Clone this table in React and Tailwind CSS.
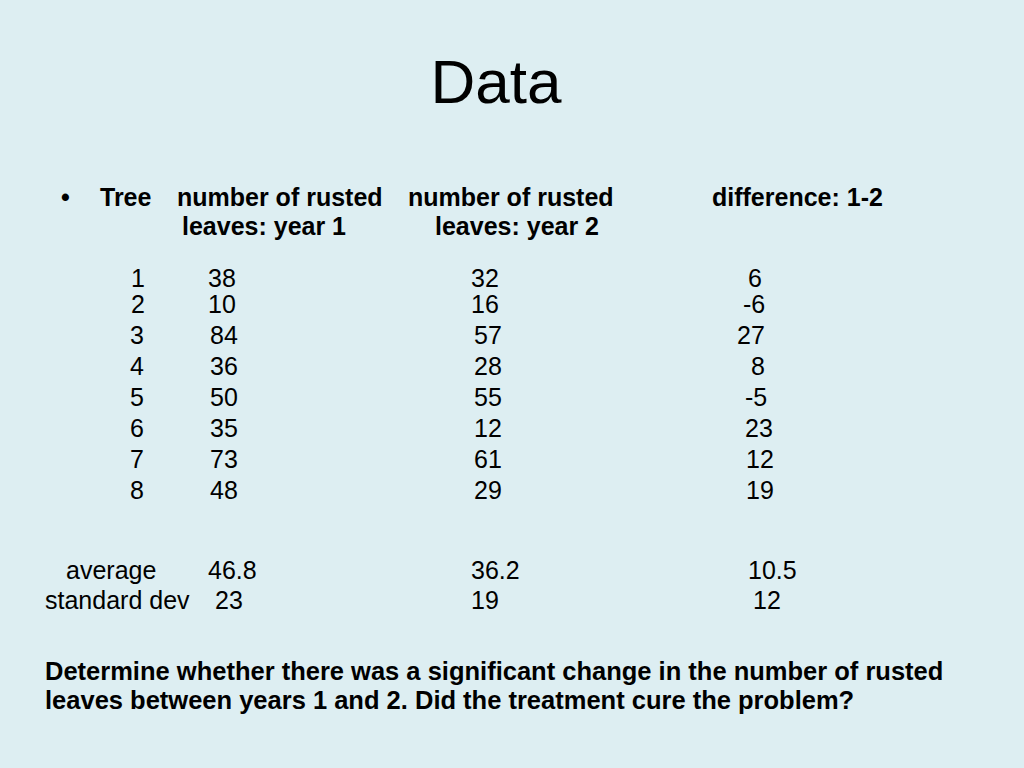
export default function App() {
  const font = { fontFamily: '"Liberation Sans", Arial, sans-serif' };
  return (
    <div className="w-[1024px] h-[768px] bg-[#ddeef2] text-black overflow-hidden" style={font}>
      <div className="pt-[51px] pr-[32px] text-center text-[62px] leading-[62px]">Data</div>

      <div className="mt-[70px] text-[25px] leading-[29px] font-bold whitespace-nowrap">
        <div className="flex pl-[61px]">
          <span className="w-[39px]">•</span>
          <span className="w-[77px]">Tree</span>
          <span className="w-[231px]">number of rusted</span>
          <span className="w-[304px]">number of rusted</span>
          <span>difference: 1-2</span>
        </div>
        <div className="flex pl-[182px]">
          <span className="w-[253px]">leaves: year 1</span>
          <span>leaves: year 2</span>
        </div>
      </div>

      <div className="mt-[22px] text-[25px] leading-[30px] whitespace-nowrap">
        <div className="flex pl-[131px] h-[26px]">
          <span className="w-[77px]">1</span>
          <span className="w-[263px]">38</span>
          <span className="w-[277px]">32</span>
          <span>6</span>
        </div>
        <div className="flex pl-[131px] h-[31px]">
          <span className="w-[77px]">2</span>
          <span className="w-[263px]">10</span>
          <span className="w-[272px]">16</span>
          <span>-6</span>
        </div>
        <div className="flex pl-[130px] h-[31px]">
          <span className="w-[80px]">3</span>
          <span className="w-[264px]">84</span>
          <span className="w-[263px]">57</span>
          <span>27</span>
        </div>
        <div className="flex pl-[130px] h-[31px]">
          <span className="w-[80px]">4</span>
          <span className="w-[264px]">36</span>
          <span className="w-[277px]">28</span>
          <span>8</span>
        </div>
        <div className="flex pl-[130px] h-[31px]">
          <span className="w-[80px]">5</span>
          <span className="w-[264px]">50</span>
          <span className="w-[271px]">55</span>
          <span>-5</span>
        </div>
        <div className="flex pl-[130px] h-[31px]">
          <span className="w-[80px]">6</span>
          <span className="w-[264px]">35</span>
          <span className="w-[271px]">12</span>
          <span>23</span>
        </div>
        <div className="flex pl-[130px] h-[31px]">
          <span className="w-[80px]">7</span>
          <span className="w-[264px]">73</span>
          <span className="w-[272px]">61</span>
          <span>12</span>
        </div>
        <div className="flex pl-[130px] h-[30px]">
          <span className="w-[80px]">8</span>
          <span className="w-[264px]">48</span>
          <span className="w-[272px]">29</span>
          <span>19</span>
        </div>
      </div>

      <div className="mt-[50px] text-[25px] leading-[30px] whitespace-nowrap">
        <div className="flex pl-[66px]">
          <span className="w-[142px]">average</span>
          <span className="w-[263px]">46.8</span>
          <span className="w-[277px]">36.2</span>
          <span>10.5</span>
        </div>
        <div className="flex pl-[45px]">
          <span className="w-[170px]">standard dev</span>
          <span className="w-[256px]">23</span>
          <span className="w-[282px]">19</span>
          <span>12</span>
        </div>
      </div>

      <div className="mt-[42px] pl-[45px] text-[25.5px] leading-[29px] font-bold whitespace-nowrap">
        <div>Determine whether there was a significant change in the number of rusted</div>
        <div>leaves between years 1 and 2. Did the treatment cure the problem?</div>
      </div>
    </div>
  );
}
